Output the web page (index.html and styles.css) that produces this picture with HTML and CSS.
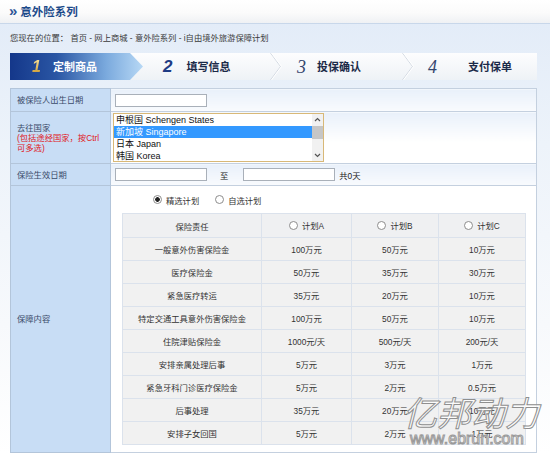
FILE: index.html
```html
<!DOCTYPE html>
<html lang="zh-CN">
<head>
<meta charset="utf-8">
<title>意外险系列</title>
<link rel="stylesheet" href="styles.css">
</head>
<body>
<div class="page">
  <div class="title"><span class="raquo">»</span><span class="title-text">意外险系列</span></div>
  <div class="main">
    <div class="crumb">您现在的位置： 首页 - 网上商城 - 意外险系列 - i自由境外旅游保障计划</div>
    <div class="steps">
      <div class="step s1"><span class="num">1</span><span class="lbl">定制商品</span></div>
      <div class="step s2"><span class="num">2</span><span class="lbl">填写信息</span></div>
      <svg class="sep" width="12" height="27" viewBox="0 0 12 27"><polyline points="0.5,0 10.5,13.5 0.5,27" fill="none" stroke="#d3d9e2" stroke-width="1"/><polyline points="1.5,0 11.5,13.5 1.5,27" fill="none" stroke="#ffffff" stroke-width="1"/></svg>
      <div class="step s3"><span class="num">3</span><span class="lbl">投保确认</span></div>
      <svg class="sep" width="12" height="27" viewBox="0 0 12 27"><polyline points="0.5,0 10.5,13.5 0.5,27" fill="none" stroke="#d3d9e2" stroke-width="1"/><polyline points="1.5,0 11.5,13.5 1.5,27" fill="none" stroke="#ffffff" stroke-width="1"/></svg>
      <div class="step s4"><span class="num">4</span><span class="lbl">支付保单</span></div>
    </div>
    <table class="form">
      <tr class="r1">
        <th class="lab">被保险人出生日期</th>
        <td class="val"><input type="text" class="txt"></td>
      </tr>
      <tr class="r2">
        <th class="lab">去往国家<br><span class="red">(包括途经国家，按Ctrl<br>可多选)</span></th>
        <td class="val">
          <div class="listbox" role="listbox" aria-multiselectable="true">
            <div class="opts">
              <div class="opt" role="option">申根国 Schengen States</div>
              <div class="opt sel" role="option" aria-selected="true">新加坡 Singapore</div>
              <div class="opt" role="option">日本 Japan</div>
              <div class="opt" role="option">韩国 Korea</div>
            </div>
            <div class="sb">
              <svg class="arr" width="11" height="12" viewBox="0 0 11 12"><polyline points="3,7 5.5,4.5 8,7" fill="none" stroke="#555" stroke-width="1.2"/></svg>
              <div class="thumb"></div>
              <div class="track"></div>
              <svg class="arr" width="11" height="12" viewBox="0 0 11 12"><polyline points="3,5 5.5,7.5 8,5" fill="none" stroke="#555" stroke-width="1.2"/></svg>
            </div>
          </div>
        </td>
      </tr>
      <tr class="r3">
        <th class="lab">保险生效日期</th>
        <td class="val"><input type="text" class="txt"><span class="to">至</span><input type="text" class="txt"><span class="days">共0天</span></td>
      </tr>
      <tr class="r4">
        <th class="lab">保障内容</th>
        <td class="val">
          <div class="plans">
            <label class="rl"><input type="radio" name="plan" checked><span>精选计划</span></label>
            <label class="rl"><input type="radio" name="plan"><span>自选计划</span></label>
          </div>
          <table class="cov">
            <tr class="head">
              <td>保险责任</td>
              <td><label class="rl"><input type="radio" name="pick"><span>计划A</span></label></td>
              <td><label class="rl"><input type="radio" name="pick"><span>计划B</span></label></td>
              <td><label class="rl"><input type="radio" name="pick"><span>计划C</span></label></td>
            </tr>
            <tr><td>一般意外伤害保险金</td><td>100万元</td><td>50万元</td><td>10万元</td></tr>
            <tr><td>医疗保险金</td><td>50万元</td><td>35万元</td><td>30万元</td></tr>
            <tr><td>紧急医疗转运</td><td>35万元</td><td>20万元</td><td>10万元</td></tr>
            <tr><td>特定交通工具意外伤害保险金</td><td>100万元</td><td>50万元</td><td>10万元</td></tr>
            <tr><td>住院津贴保险金</td><td>1000元/天</td><td>500元/天</td><td>200元/天</td></tr>
            <tr><td>安排亲属处理后事</td><td>5万元</td><td>3万元</td><td>1万元</td></tr>
            <tr><td>紧急牙科门诊医疗保险金</td><td>5万元</td><td>2万元</td><td>0.5万元</td></tr>
            <tr><td>后事处理</td><td>35万元</td><td>20万元</td><td>10万元</td></tr>
            <tr><td>安排子女回国</td><td>5万元</td><td>2万元</td><td>1万元</td></tr>
          </table>
        </td>
      </tr>
    </table>
  </div>
  <div class="watermark"><div class="wm-cn">亿邦动力</div><div class="wm-en">www.ebrun.com</div></div>
</div>
</body>
</html>
```

FILE: styles.css
```css
* { box-sizing: border-box; }
html, body { margin: 0; padding: 0; }
body {
  width: 550px;
  height: 460px;
  overflow: hidden;
  background: #fff;
  font-family: "Liberation Sans", "Noto Sans CJK SC", sans-serif;
  font-size: 8.3px;
  color: #333;
}
.page { position: relative; height: 460px; }

.title {
  height: 24px;
  padding-left: 9px;
  display: flex;
  align-items: center;
  gap: 3px;
  background: linear-gradient(#ffffff 0%, #fbfbfb 55%, #eff1f4 100%);
  border-bottom: 1px solid #c8d7ea;
}
.raquo { font: bold 15px/1 "Liberation Sans", sans-serif; color: #2b5597; margin-top: -2px; }
.title-text { font: bold 11.5px/1 "Noto Sans CJK SC", sans-serif; color: #1c4a8a; }

.main {
  height: 436px;
  padding: 0 13px 0 10px;
  background: linear-gradient(#e3ecf8 0, #edf3fa 120px, #f7f9fc 300px, #ffffff 430px);
}
.crumb { height: 29px; padding-top: 9px; line-height: 10px; color: #3a3a3a; white-space: nowrap; }

.steps {
  display: flex;
  height: 27px;
  background: linear-gradient(#fdfdfe, #eef2f6);
}
.step { display: flex; align-items: center; }
.step .lbl { font: bold 11px/1 "Noto Sans CJK SC", sans-serif; color: #1b2a48; }
.s1 {
  width: 133px;
  padding-left: 22px;
  clip-path: polygon(0 0, 120px 0, 133px 50%, 120px 100%, 0 100%);
  background: linear-gradient(90deg, #14378a 0%, #2a56a4 35%, #7aa9dd 72%, #b7d8f5 100%);
}
.s1 .num {
  font: italic bold 16px/1 "Liberation Sans", sans-serif;
  color: #dcae3e;
  background: linear-gradient(#f8e29a, #c9952a);
  -webkit-background-clip: text;
  background-clip: text;
  -webkit-text-fill-color: transparent;
}
.s1 .lbl { color: #fff; margin-left: 12px; }
.s2 { width: 127px; padding-left: 20px; }
.s2 .num { font: italic bold 17px/1 "Liberation Sans", sans-serif; color: #1f3c84; }
.s2 .lbl { margin-left: 14px; }
.sep { flex: none; display: block; }
.s3 { width: 120px; padding-left: 15px; }
.s4 { flex: 1; padding-left: 14px; }
.s3 .num, .s4 .num { font: italic 18px/1 "Liberation Serif", serif; color: #34466e; }
.s3 .lbl { margin-left: 11px; }
.s4 .lbl { margin-left: 31px; }

.form {
  width: 527px;
  margin-top: 8px;
  border-collapse: collapse;
  border: 1px solid #b3c5da;
}
.lab {
  width: 100px;
  background: #c8ddf5;
  text-align: left;
  font-weight: normal;
  color: #3a4b69;
  padding: 0 0 0 6px;
  border: 1px solid #b3c5da;
  vertical-align: middle;
  line-height: 10px;
}
.red { color: #e0201c; }
.val {
  border: 1px solid #c4d0df;
  padding: 0 0 0 4px;
  background: linear-gradient(#e9f0fa, #ffffff 30px);
  vertical-align: middle;
}
.r1 { height: 23px; }
.r2 { height: 52px; }
.r3 { height: 22px; }
.r4 { height: 267px; }
.r2 .val { padding-left: 2px; }
.r4 .val { padding: 0; vertical-align: top; background: #fff; }

.txt {
  display: inline-block;
  vertical-align: middle;
  width: 92px;
  height: 13px;
  margin: 0;
  padding: 0;
  border: 1px solid #a9b0b9;
  background: #fff;
}
.to { margin: 0 15px 0 13px; vertical-align: middle; color: #222; }
.days { margin-left: 4px; vertical-align: middle; color: #222; }

.listbox {
  width: 211px;
  height: 49px;
  border: 1px solid #d8b877;
  background: #fff;
  display: flex;
}
.opts { flex: 1; }
.opt {
  height: 12px;
  line-height: 12px;
  padding-left: 2px;
  font-size: 9px;
  white-space: nowrap;
  color: #111;
}
.opt.sel { background: #3399ff; color: #fff; }
.sb {
  width: 11px;
  background: #f1f1f1;
  display: flex;
  flex-direction: column;
}
.arr { display: block; flex: none; }
.thumb { height: 13px; background: #c6c6c6; flex: none; }
.track { flex: 1; }

.plans {
  height: 27px;
  display: flex;
  align-items: center;
  padding-left: 42px;
  gap: 16px;
}
.rl { display: inline-flex; align-items: center; gap: 4px; color: #333; }
.rl input {
  -webkit-appearance: none;
  appearance: none;
  width: 9px;
  height: 9px;
  margin: 0;
  border: 1px solid #8d8d8d;
  border-radius: 50%;
  background: #fff;
}
.rl input:checked { background: radial-gradient(circle, #222 0 2px, #fff 2.6px); }

.cov {
  width: 404px;
  margin-left: 11px;
  border-collapse: collapse;
  background: #f1f1f1;
}
.cov td {
  height: 23px;
  padding: 0;
  text-align: center;
  border: 1px solid #dbe2ec;
  background: #f1f1f1;
  color: #333;
}
.cov .head td { height: 24px; background: #eff0f2; }
.cov td:nth-child(1) { width: 139px; }
.cov td:nth-child(2) { width: 90px; }
.cov td:nth-child(3) { width: 87px; }

.watermark { position: absolute; left: 403px; top: 392px; pointer-events: none; }
.wm-cn {
  font: italic 34px/40px "Noto Sans CJK SC", sans-serif;
  color: rgba(255, 255, 255, 0.75);
  -webkit-text-stroke: 1px #8f8f8f;
}
.wm-en {
  font: 16px/14px "Liberation Sans", sans-serif;
  color: rgba(255, 255, 255, 0.8);
  -webkit-text-stroke: 1px #9a9a9a;
  margin-left: 7px;
}
```
